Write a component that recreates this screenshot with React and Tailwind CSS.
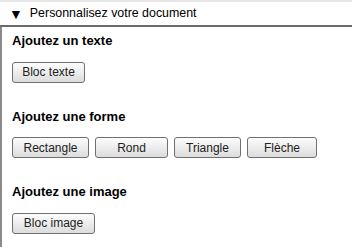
export default function App() {
  const shapes = [
    { label: "Rectangle", w: "w-[77px]" },
    { label: "Rond", w: "w-[73px]" },
    { label: "Triangle", w: "w-[67px]" },
    { label: "Flèche", w: "w-[70px]" },
  ];

  const btn =
    "h-[21px] rounded-[3px] border border-[#707070] bg-gradient-to-b from-[#fdfdfd] to-[#dcdcdc] text-[12px] leading-none text-[#222]";

  return (
    <div className="w-[352px] h-[247px] bg-white font-['Liberation_Sans',Arial,sans-serif] text-black overflow-hidden">
      <div className="h-[27px] border-t-2 border-t-[#e6e6e6] border-b-2 border-b-[#6a6a6a] flex items-center text-[12.4px]">
        <span className="ml-[9px] text-[14px] leading-none">▼</span>
        <span className="ml-[7px]">Personnalisez votre document</span>
      </div>
      <div className="border-l-2 border-l-[#8a8a8a] h-[220px] pl-[10px] pt-[6px]">
        <h2 className="text-[13px] font-bold leading-[16px]">Ajoutez un texte</h2>
        <div className="mt-[10px]">
          <button className={`${btn} w-[73px]`}>Bloc texte</button>
        </div>

        <h2 className="mt-[26px] text-[13px] font-bold leading-[16px]">Ajoutez une forme</h2>
        <div className="mt-[12px] flex gap-[6px]">
          {shapes.map((s) => (
            <button key={s.label} className={`${btn} ${s.w}`}>
              {s.label}
            </button>
          ))}
        </div>

        <h2 className="mt-[26px] text-[13px] font-bold leading-[16px]">Ajoutez une image</h2>
        <div className="mt-[10px]">
          <button className={`${btn} w-[83px]`}>Bloc image</button>
        </div>
      </div>
    </div>
  );
}
